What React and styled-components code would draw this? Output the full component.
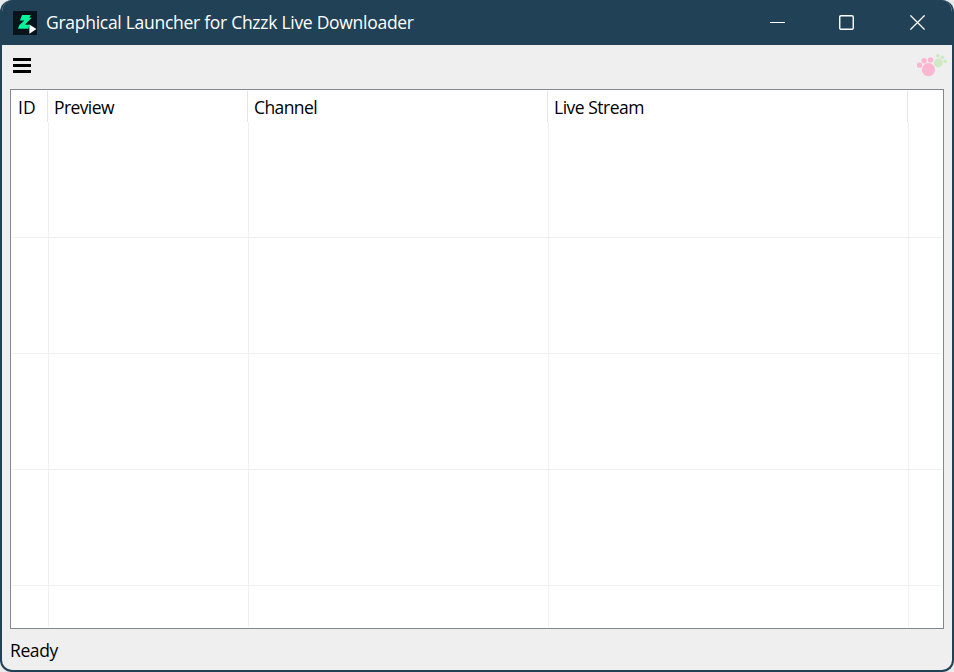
import React from "react";
import styled, { createGlobalStyle } from "styled-components";

const GlobalStyle = createGlobalStyle`
  * { box-sizing: border-box; }
  body { margin: 0; background: #e9ebea; overflow: hidden; }
`;

const Window = styled.div`
  display: flex;
  flex-direction: column;
  width: 954px;
  height: 672px;
  overflow: hidden;
  border: 2px solid #214157;
  border-top: 0;
  border-radius: 12px;
  background: #efefef;
  color: #000;
  font-family: "Open Sans", "Noto Sans", sans-serif;
  font-size: 17.5px;
  font-weight: 375;
  line-height: 24px;
`;

const TitleBar = styled.header`
  display: flex;
  align-items: center;
  height: 45px;
  padding-left: 11px;
  flex: none;
  background: #214157;
  color: #fff;
`;

const Label = styled.span`
  display: block;
  white-space: nowrap;
  letter-spacing: ${(p) => p.$spacing || 0}px;
`;

const Title = styled.h1`
  flex: 1;
  margin: 0 0 2px 9px;
  font-size: inherit;
  font-weight: inherit;
`;

const CaptionButton = styled.button`
  display: flex;
  align-items: center;
  justify-content: center;
  width: ${(p) => p.$width || 70}px;
  height: 45px;
  padding: 0;
  border: 0;
  background: transparent;
  color: #fff;
`;

const Toolbar = styled.nav`
  display: flex;
  justify-content: space-between;
  align-items: flex-start;
  flex: none;
  height: 44px;
  padding: 9px 5px 0 11px;
`;

const MenuButton = styled.button`
  display: block;
  width: 18px;
  height: 19px;
  padding: 4px 0 0;
  border: 0;
  background: transparent;
`;

const Icon = styled.svg`
  display: block;
  flex: none;
`;

const Table = styled.main`
  display: flex;
  flex-direction: column;
  flex: none;
  height: 540px;
  margin: 0 8px;
  padding: 1px 1px 2px;
  border: 1px solid #828790;
  background: #fff;
`;

const HeaderRow = styled.div`
  display: grid;
  grid-template-columns: 36px 200px 300px 360px 1fr;
  flex: none;
  height: 31px;
`;

const HeaderCell = styled.div`
  padding: 4px 0 0 6px;
  border-right: 1px solid #e5e5e5;
  &:last-child { border-right: 0; }
`;

const Row = styled.div`
  display: grid;
  grid-template-columns: 37px 200px 300px 360px 1fr;
  flex: 0 0 ${(p) => (p.$partial ? 41 : 116)}px;
  border-bottom: ${(p) => (p.$partial ? 0 : 1)}px solid #f0f0f0;
`;

const Cell = styled.div`
  border-right: 1px solid #f0f0f0;
  &:last-child { border-right: 0; }
`;

const StatusBar = styled.footer`
  padding: 9px 8px 0;
`;

const columns = [
  { name: "ID", spacing: 0 },
  { name: "Preview", spacing: -0.6 },
  { name: "Channel", spacing: -0.6 },
  { name: "Live Stream", spacing: -0.5 },
  { name: "", spacing: 0 },
];
const rows = [0, 1, 2, 3, 4];

const AppIcon = () => (
  <Icon width="24" height="24" viewBox="0 0 24 24">
    <path fill="#08131b" d="M0 0h24v24H0z" />
    <path fill="#00f49b" d="M9 4h8.8l-1.5 2.7h2.4l-6.9 7.1h4.4l-.7 4H5l1.2-3.6 5.1-4.6H6.9z" />
    <path fill="#fff" d="M16.4 13.4v9.3l7-4.7z" />
  </Icon>
);

const Paws = () => (
  <Icon width="30" height="24" viewBox="0 0 30 24">
    <g fill="#fbb6d1">
      <circle cx="11.4" cy="15.7" r="6.6" />
      <circle cx="2.5" cy="11.2" r="2.7" />
      <circle cx="7.1" cy="6.8" r="2.7" />
      <circle cx="13.6" cy="5.9" r="2.7" />
    </g>
    <g fill="#cfe9c4">
      <circle cx="21.3" cy="8.9" r="4.5" />
      <circle cx="20.9" cy="1.8" r="1.9" />
      <circle cx="25.4" cy="3.3" r="1.9" />
      <circle cx="28.1" cy="7.3" r="1.9" />
    </g>
  </Icon>
);

export default function App() {
  return (
    <>
      <GlobalStyle />
      <Window>
        <TitleBar>
          <AppIcon />
          <Title><Label $spacing={-0.28}>Graphical Launcher for Chzzk Live Downloader</Label></Title>
          <CaptionButton aria-label="Minimize" $width={67}>
            <Icon width="15" height="15"><path fill="#fff" d="M0 7h15v1H0z" /></Icon>
          </CaptionButton>
          <CaptionButton aria-label="Maximize" $width={71}>
            <Icon width="15" height="15">
              <rect x=".75" y=".75" width="13.5" height="13.5" rx="1.2" fill="none" stroke="#fff" strokeWidth="1.4" />
            </Icon>
          </CaptionButton>
          <CaptionButton aria-label="Close">
            <Icon width="15" height="15">
              <path d="M.4.4l14.2 14.2M14.6.4L.4 14.6" stroke="#fff" strokeWidth="1.3" />
            </Icon>
          </CaptionButton>
        </TitleBar>
        <Toolbar>
          <MenuButton aria-label="Menu">
            <Icon width="18" height="15"><path d="M0 0h18v3H0zM0 6h18v3H0zM0 12h18v3H0z" /></Icon>
          </MenuButton>
          <Paws />
        </Toolbar>
        <Table>
          <HeaderRow>
            {columns.map((c) => (
              <HeaderCell key={c.name}><Label $spacing={c.spacing}>{c.name}</Label></HeaderCell>
            ))}
          </HeaderRow>
          {rows.map((r) => (
            <Row key={r} $partial={r === 4}>
              {columns.map((c) => <Cell key={c.name} />)}
            </Row>
          ))}
        </Table>
        <StatusBar><Label $spacing={-0.4}>Ready</Label></StatusBar>
      </Window>
    </>
  );
}
